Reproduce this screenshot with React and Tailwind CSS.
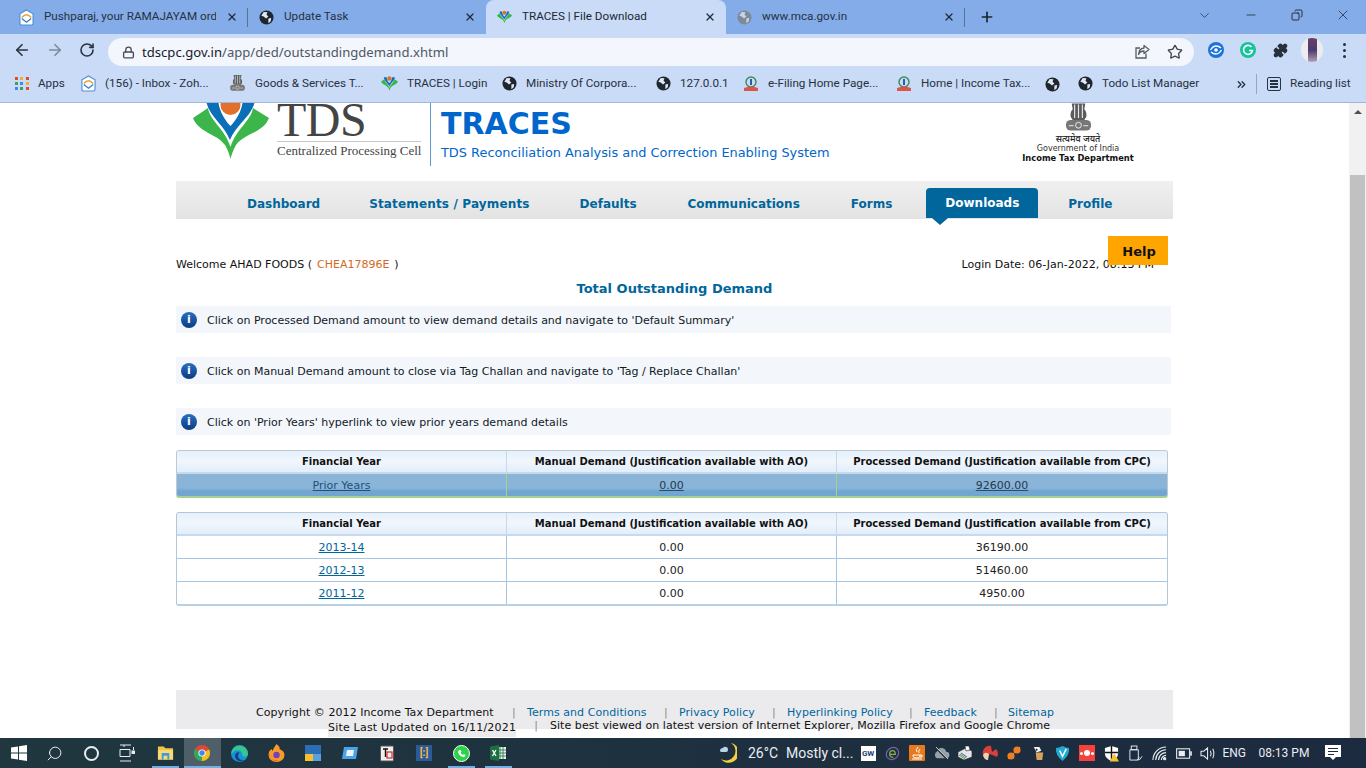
import React from 'react';
import { ArrowLeft, ArrowRight, RotateCw, Lock, Star, Puzzle, X, Plus, ChevronDown, Minus, Copy, ChevronsRight, Search } from 'lucide-react';

const Leaf = ({ className }) => (
  <svg viewBox="0 -8 76 64" className={className}>
    <circle cx="37.5" cy="2" r="10" fill="#e3702a" />
    <path d="M0 15 L15 5 C17 18 32 26 37.5 44 C43 26 58 18 60 5 L76 15 C70 30 52 30 43 42 C40 47 38.5 52 37.5 56 C36.5 52 35 47 32 42 C23 30 6 30 0 15Z" fill="#3cb54a" />
    <path d="M13 -4 C14 12 30 20 37 37 C44 20 61 12 62 -4 L50 -4 C49 8 44 16 37.5 23 C31 16 26 8 25 -4Z" fill="#0b6fb8" />
  </svg>
);

const Globe = ({ grey }) => (
  <svg viewBox="0 0 16 16" className="w-[15px] h-[15px] shrink-0">
    <circle cx="8" cy="8" r="7.5" fill={grey ? '#7f8a99' : '#20262e'} />
    <path d="M5 2 L9 2.5 L8 5 L10 7 L7.5 9 L5 7 L2.5 6 Z M10 9 L13 8.5 L12.5 12 L10 14 Z" fill={grey ? '#c5d4ea' : '#dfe8f5'} />
  </svg>
);

const ZohoIcon = () => (
  <svg viewBox="0 0 16 18" className="w-[15px] h-[17px] shrink-0">
    <path d="M8 1 L15 5 V15 Q15 17 13 17 H3 Q1 17 1 15 V5Z" fill="#fff" stroke="#4a90d9" strokeWidth="1.2" />
    <path d="M3 9 Q8 3 13 9" fill="none" stroke="#e8a33d" strokeWidth="1.5" />
    <path d="M3 10 L8 14 L13 10" fill="none" stroke="#3d7fc4" strokeWidth="1.5" />
  </svg>
);

const Emblem = ({ className }) => (
  <svg viewBox="0 0 30 30" className={className}>
    <path d="M8 0 H22 L21 6 Q24 9 23 14 L21 17 H9 L7 14 Q6 9 9 6Z" fill="#5c5c5c" />
    <path d="M11 1 V15 M15 1 V15 M19 1 V15" stroke="#e5e5e5" strokeWidth="1.2" />
    <rect x="2" y="17" width="26" height="11" rx="5" fill="#777" />
    <circle cx="15" cy="22.5" r="3" fill="none" stroke="#eee" />
    <path d="M5 23 H10 M20 23 H25" stroke="#eee" />
  </svg>
);

const IncomeTaxIcon = () => (
  <svg viewBox="0 0 16 16" className="w-[16px] h-[16px] shrink-0">
    <circle cx="8" cy="6" r="5" fill="none" stroke="#3a8a5c" strokeWidth="1.4" />
    <rect x="7" y="3" width="2" height="6" fill="#2a5fa5" />
    <path d="M1 12 Q8 9 15 12 V15 H1Z" fill="#d8564e" />
  </svg>
);

const Tab = ({ icon, title, active, divider, w }) => (
  <div className={`relative flex items-center h-[34px] pl-[11px] pr-[10px] gap-[10px] text-[11.7px] ${w} ${active ? 'bg-[#c9dbf6] rounded-t-[8px] text-[#1d2733]' : 'text-[#27313f]'}`}>
    {icon}
    <span className="flex-1 overflow-hidden whitespace-nowrap">{title}</span>
    <X size={12} strokeWidth={2.5} className="text-[#1f2a36] shrink-0" />
    {divider && <span className="absolute right-0 top-[8px] h-[19px] w-px bg-[#5d7290]"></span>}
  </div>
);

const Bookmark = ({ icon, label, w }) => (
  <div className={`flex items-center gap-[9px] shrink-0 ${w}`}>
    {icon}
    <span className="whitespace-nowrap">{label}</span>
  </div>
);

const InfoRow = ({ children }) => (
  <div className="h-[27px] mb-[24px] w-[995px] bg-[#f3f7fb] flex items-center pl-[5px] gap-[10px] text-[11px] text-[#111827]">
    <span className="w-[16px] h-[16px] rounded-full bg-gradient-to-b from-[#2a6fc0] to-[#0b3b85] flex items-center justify-center text-white font-bold text-[11px] leading-none">i</span>
    <span className="pt-[3px]">{children}</span>
  </div>
);

const Header = () => (
  <div className="grid grid-cols-[329px_330px_1fr] h-[23px] bg-gradient-to-b from-[#e6f1fb] via-[#f0f6fd] to-[#e2eefa] border-b-2 border-[#c7d9ea] font-bold text-[10px] text-[#111] text-center leading-[22px]">
    <div>Financial Year</div>
    <div className="border-l border-[#c6d8e9]">Manual Demand (Justification available with AO)</div>
    <div className="border-l border-[#c6d8e9]">Processed Demand (Justification available from CPC)</div>
  </div>
);

const yearRows = [
  ['2013-14', '0.00', '36190.00'],
  ['2012-13', '0.00', '51460.00'],
  ['2011-12', '0.00', '4950.00'],
];

const FooterLink = ({ w, children }) => (
  <span className={`flex shrink-0 text-[#00669c] ${w}`}>
    <span className="w-[15px] text-[#8a8a8a]">|</span>
    {children}
  </span>
);

const TaskIcon = ({ children, active, line }) => (
  <div className={`relative w-[37px] h-[30px] flex items-center justify-center ${active ? 'bg-[#4e5f69]' : ''}`}>
    {children}
    {line && <span className={`absolute bottom-0 h-[2px] bg-[#6fb0e6] ${active ? 'left-0 right-0' : 'left-[5px] right-[5px]'}`}></span>}
  </div>
);

const Tray = ({ children }) => <div className="w-[24.3px] h-[30px] flex items-center justify-center">{children}</div>;

export default function App() {
  return (
    <div className="w-[1366px] h-[768px] overflow-hidden flex flex-col bg-white font-['DejaVu_Sans',sans-serif]">
      {/* tab strip */}
      <div className="h-[34px] shrink-0 bg-[#83ace9] flex pl-[8px] font-['Roboto',sans-serif]">
        <Tab w="w-[240px]" icon={<ZohoIcon />} title="Pushparaj, your RAMAJAYAM ord" divider />
        <Tab w="w-[238px]" icon={<Globe />} title="Update Task" />
        <Tab w="w-[240px]" active icon={<Leaf className="w-[15px] h-[14px] shrink-0" />} title="TRACES | File Download" />
        <Tab w="w-[239px]" icon={<Globe grey />} title="www.mca.gov.in" divider />
        <div className="w-[44px] flex items-center justify-center"><Plus size={16} strokeWidth={2.5} className="text-[#1b2430]" /></div>
        <div className="flex-1 flex justify-end items-start text-[#26303c]">
          <div className="w-[46px] h-[30px] flex items-center justify-center mr-[1px]"><ChevronDown size={15} strokeWidth={1.2} /></div>
          <div className="w-[46px] h-[30px] flex items-center justify-center"><Minus size={14} strokeWidth={1.4} /></div>
          <div className="w-[46px] h-[30px] flex items-center justify-center"><Copy size={12} strokeWidth={1.6} className="-scale-x-100 text-[#111]" /></div>
          <div className="w-[46px] h-[30px] flex items-center justify-center"><X size={16} strokeWidth={1.2} /></div>
        </div>
      </div>

      {/* toolbar */}
      <div className="h-[32px] shrink-0 bg-[#c9dbf6] flex items-center font-['Noto_Sans',sans-serif]">
        <div className="w-[108px] flex items-center pl-[13px] gap-[15px] text-[#2a3340]">
          <ArrowLeft size={18} strokeWidth={2.2} />
          <ArrowRight size={18} strokeWidth={2.2} className="text-[#7e8a9c]" />
          <RotateCw size={16} strokeWidth={2.4} />
        </div>
        <div className="w-[1086px] h-[28px] mt-[4px] self-start rounded-full bg-[#f3f6fc] flex items-center pl-[14px] pr-[11px] text-[13.1px]">
          <Lock size={13} strokeWidth={2.5} className="text-[#4a4f57] mr-[7px]" />
          <span className="flex-1 pt-px text-[#4e5866]"><span className="text-[#16202c]">tdscpc.gov.in</span>/app/ded/outstandingdemand.xhtml</span>
          <svg viewBox="0 0 16 16" className="w-[16px] h-[16px] mr-[17px]" fill="none" stroke="#555c66" strokeWidth="1.3">
            <path d="M12 9.5 V14 H2 V4 H6" />
            <path d="M10 1.5 L15 5.5 L10 9.5 V7 Q6 7 4.5 10.5 Q5 4.5 10 4Z" strokeLinejoin="round" />
          </svg>
          <Star size={16} strokeWidth={2} className="text-[#3f4650]" />
        </div>
        <div className="flex-1 flex items-center pl-[6px]">
          <div className="w-[32px] flex justify-center">
            <svg viewBox="0 0 16 16" className="w-[16px] h-[16px]">
              <circle cx="8" cy="8" r="8" fill="#1a73d9" />
              <circle cx="8" cy="8" r="1.8" fill="#fff" />
              <path d="M2.5 8 Q5 4 8 4 Q11 4 13 6 M13.5 8 Q11 12 8 12 Q5 12 3 10" fill="none" stroke="#fff" strokeWidth="1.4" />
            </svg>
          </div>
          <div className="w-[32px] flex justify-center">
            <svg viewBox="0 0 16 16" className="w-[16px] h-[16px]">
              <circle cx="8" cy="8" r="8" fill="#15c39a" />
              <path d="M11.5 5 A4.5 4.5 0 1 0 12.5 8.5 H9" fill="none" stroke="#fff" strokeWidth="1.6" />
            </svg>
          </div>
          <div className="w-[32px] flex justify-center"><Puzzle size={15} fill="#27303b" className="text-[#27303b]" /></div>
          <div className="w-[32px] flex justify-center">
            <span className="w-[22px] h-[24px] rounded-full bg-[#ecebef] flex justify-center overflow-hidden">
              <span className="w-[9px] h-full bg-gradient-to-b from-[#6b3f66] via-[#4c3a6e] to-[#b7a0b5]"></span>
            </span>
          </div>
          <div className="w-[32px] flex flex-col items-center gap-[3px]">
            <span className="w-[3px] h-[3px] rounded-full bg-[#27303b]"></span>
            <span className="w-[3px] h-[3px] rounded-full bg-[#27303b]"></span>
            <span className="w-[3px] h-[3px] rounded-full bg-[#27303b]"></span>
          </div>
        </div>
      </div>

      {/* bookmarks */}
      <div className="h-[37px] shrink-0 bg-[#c9dbf6] border-b border-[#a3b6d6] flex items-center pl-[15px] text-[11.7px] text-[#27313f] font-['Roboto',sans-serif]">
        <Bookmark w="w-[66px]" label="Apps" icon={
          <span className="grid grid-cols-3 gap-[2px] w-[14px]">
            {['#e0463a', '#f2b01e', '#e0463a', '#3aa655', '#4285f4', '#f2b01e', '#4285f4', '#3aa655', '#e0463a'].map((c, i) => <span key={i} className="w-[3px] h-[3px]" style={{ background: c }}></span>)}
          </span>
        } />
        <Bookmark w="w-[148px]" label="(156) - Inbox - Zoh..." icon={<ZohoIcon />} />
        <Bookmark w="w-[152px]" label="Goods & Services T..." icon={<Emblem className="w-[17px] h-[17px]" />} />
        <Bookmark w="w-[121px]" label="TRACES | Login" icon={<Leaf className="w-[17px] h-[15px]" />} />
        <Bookmark w="w-[154px]" label="Ministry Of Corpora..." icon={<Globe />} />
        <Bookmark w="w-[87px]" label="127.0.0.1" icon={<Globe />} />
        <Bookmark w="w-[153px]" label="e-Filing Home Page..." icon={<IncomeTaxIcon />} />
        <Bookmark w="w-[149px]" label="Home | Income Tax..." icon={<IncomeTaxIcon />} />
        <Globe />
        <span className="w-[18px]"></span>
        <Bookmark w="w-[148px]" label="Todo List Manager" icon={<Globe />} />
        <ChevronsRight size={13} strokeWidth={2.5} className="ml-[9px] text-[#27313f]" />
        <span className="w-px h-[20px] bg-[#93a6c4] ml-[8px]"></span>
        <div className="flex items-center gap-[9px] ml-[10px]">
          <span className="w-[14px] h-[14px] border-[1.5px] border-[#27313f] rounded-[2px] flex flex-col justify-center gap-[1.5px] px-[2px]">
            <span className="h-[1.5px] bg-[#27313f]"></span><span className="h-[1.5px] bg-[#27313f]"></span><span className="h-[1.5px] bg-[#27313f]"></span>
          </span>
          <span>Reading list</span>
        </div>
      </div>

      {/* page */}
      <div className="flex-1 flex overflow-hidden">
        <div className="flex-1 pl-[176px]">
          <div className="w-[997px] relative">
            {/* header band */}
            <div className="h-[78px] flex overflow-hidden">
              <Leaf className="w-[76px] h-[64px] ml-[17px] -mt-[8px] shrink-0" />
              <div className="w-[144px] ml-[8px] shrink-0">
                <div className="font-['Liberation_Serif',serif] text-[48px] leading-[34px] h-[38px] text-[#444] tracking-[-0.5px]">TDS</div>
                <div className="border-t border-[#c8c8c8] pt-[1px] font-['Liberation_Serif',serif] text-[13px] leading-[16px] text-[#444] whitespace-nowrap">Centralized Processing Cell</div>
              </div>
              <div className="w-px h-[63px] bg-[#5a9bd5] ml-[9px] shrink-0"></div>
              <div className="ml-[10px] w-[520px] text-[#0066cc] shrink-0">
                <div className="font-bold text-[30px] leading-[36px] mt-[3px]">TRACES</div>
                <div className="text-[12.9px] leading-[16px] mt-[3px] whitespace-nowrap">TDS Reconciliation Analysis and Correction Enabling System</div>
              </div>
              <div className="ml-[61px] w-[112px] flex flex-col items-center">
                <Emblem className="w-[29px] h-[30px] shrink-0" />
                <div className="text-[9px] leading-[10px] mt-px font-['Noto_Sans',sans-serif] font-medium text-[#222]">सत्यमेव जयते</div>
                <div className="text-[8px] leading-[9px] text-[#333] whitespace-nowrap">Government of India</div>
                <div className="text-[8.3px] leading-[10px] font-bold text-[#111] whitespace-nowrap">Income Tax Department</div>
              </div>
            </div>

            {/* nav */}
            <div className="h-[38px] bg-gradient-to-b from-[#f0f0f0] to-[#e3e3e3] flex items-end gap-[51px] pl-[71px] text-[12px] font-bold text-[#00669c]">
              <div className="h-[37px] leading-[44px]">Dashboard</div>
              <div className="h-[37px] leading-[44px] -ml-[2px] tracking-[0.15px]">Statements / Payments</div>
              <div className="h-[37px] leading-[44px] -ml-px">Defaults</div>
              <div className="h-[37px] leading-[44px]">Communications</div>
              <div className="h-[37px] leading-[44px]">Forms</div>
              <div className="relative h-[30px] w-[112px] -ml-[17px] -mr-[21px] mb-[1px] bg-[#00669c] rounded-t-[4px] text-white text-center leading-[30px]">
                Downloads
                <span className="absolute left-[6px] top-[30px] w-0 h-0 border-l-[8px] border-r-[8px] border-t-[7px] border-l-transparent border-r-transparent border-t-[#00669c]"></span>
              </div>
              <div className="h-[37px] leading-[44px]">Profile</div>
            </div>

            {/* help overlays the login date */}
            <div className="absolute left-[932px] top-[133px] w-[60px] h-[29px] bg-[#ffa500] text-[#111] font-bold text-[13px] text-center leading-[31px] pl-[2px]">Help</div>

            <div className="flex justify-between items-center mt-[39px] h-[14px] text-[11px] text-[#111]">
              <div>Welcome AHAD FOODS ( <span className="text-[#d2691e] mx-[1.5px]">CHEA17896E</span> )</div>
              <div className="mr-[19px]">Login Date: 06-Jan-2022, 08:13 PM</div>
            </div>
            <div className="text-center font-bold text-[13px] leading-[16px] text-[#00669c] mt-[9px] mb-[9px]">Total Outstanding Demand</div>

            <InfoRow>Click on Processed Demand amount to view demand details and navigate to 'Default Summary'</InfoRow>
            <InfoRow>Click on Manual Demand amount to close via Tag Challan and navigate to 'Tag / Replace Challan'</InfoRow>
            <InfoRow>Click on 'Prior Years' hyperlink to view prior years demand details</InfoRow>

            {/* prior years table */}
            <div className="-mt-[9px] w-[992px] h-[48px] border-t border-l border-r border-[#bfc9d3] rounded-[3px] overflow-hidden border-b-2 border-b-[#a9d18e]">
              <Header />
              <div className="grid grid-cols-[329px_330px_1fr] h-[23px] text-[11px] text-center leading-[23px] text-[#1f4f7a] underline bg-[linear-gradient(to_bottom,#8ab5d9_60%,#71a6d1_75%)]">
                <div>Prior Years</div>
                <div className="border-l border-[#a9d18e] text-[#26384a]">0.00</div>
                <div className="border-l border-[#a9d18e] text-[#26384a]">92600.00</div>
              </div>
            </div>

            {/* yearly table */}
            <div className="mt-[14px] w-[992px] border-t border-r border-l border-[#b4c6d7] border-b-2 border-b-[#b9cfe2] rounded-[3px] overflow-hidden">
              <Header />
              {yearRows.map((r, i) => (
                <div key={r[0]} className={`grid grid-cols-[329px_330px_1fr] text-[11px] text-center leading-[23px] text-[#222] ${i < 2 ? 'h-[23px] border-b border-[#a4c6e2]' : 'h-[22px]'}`}>
                  <div className="text-[#00669c] underline">{r[0]}</div>
                  <div className="border-l border-[#a4c6e2]">{r[1]}</div>
                  <div className="border-l border-[#a4c6e2]">{r[2]}</div>
                </div>
              ))}
            </div>

            {/* footer */}
            <div className="mt-[84px] h-[39px] bg-[#ebebed] text-[11px] tracking-[0.06px] text-[#111] relative">
              <div className="flex pt-[16px] pl-[80px] leading-[14px] whitespace-nowrap">
                <span className="w-[256px] shrink-0">Copyright © 2012 Income Tax Department</span>
                <FooterLink w="w-[152px]">Terms and Conditions</FooterLink>
                <FooterLink w="w-[108px]">Privacy Policy</FooterLink>
                <FooterLink w="w-[137px]">Hyperlinking Policy</FooterLink>
                <FooterLink w="w-[85px]">Feedback</FooterLink>
                <FooterLink w="w-[60px]">Sitemap</FooterLink>
              </div>
              <div className="flex pl-[152px] whitespace-nowrap -mt-px">
                <span className="bg-[#ebebed] h-[18px] leading-[18px] tracking-[0.2px]">Site Last Updated on 16/11/2021</span>
                <span className="ml-[18px] leading-[14px] text-[#8a8a8a]">|</span>
                <span className="ml-[12px] leading-[14px]">Site best viewed on latest version of Internet Explorer, Mozilla Firefox and Google Chrome</span>
              </div>
            </div>
          </div>
        </div>

        {/* scrollbar */}
        <div className="w-[17px] bg-[#f1f1f1] flex flex-col items-center pt-[7px]">
          <span className="w-0 h-0 border-l-[4px] border-r-[4px] border-b-[4px] border-l-transparent border-r-transparent border-b-[#505050]"></span>
          <div className="w-[15px] flex-1 bg-[#c1c1c1] mt-[61px]"></div>
        </div>
      </div>

      {/* taskbar */}
      <div className="h-[30px] shrink-0 bg-gradient-to-r from-[#20373f] to-[#1c2a3f] flex items-center text-[#e8edf2] font-['Roboto',sans-serif]">
        <div className="w-[36px] flex justify-center pl-[1px]">
          <svg viewBox="0 0 16 16" className="w-[16px] h-[16px]"><path d="M0 2.5 L7 1.5 V7.5 H0Z M8 1.3 L16 0 V7.5 H8Z M0 8.5 H7 V14.5 L0 13.5Z M8 8.5 H16 V16 L8 14.7Z" fill="#fff" /></svg>
        </div>
        <div className="w-[37px] flex justify-center"><Search size={17} strokeWidth={1.4} className="-scale-x-100" /></div>
        <div className="w-[36px] flex justify-center"><span className="w-[15px] h-[15px] rounded-full border-2 border-[#e8edf2]"></span></div>
        <div className="w-[35px] flex justify-center">
          <svg viewBox="0 0 16 18" className="w-[16px] h-[18px]" fill="none" stroke="#e8edf2"><path d="M1 1 H12 M1 17 H12 M1 5.5 H11 V12.5 H1Z M5 1 V3 M14.5 3 V6" /><rect x="13" y="7" width="2.5" height="2.5" fill="#e8edf2" /></svg>
        </div>
        <span className="w-[2.5px]"></span>
        <TaskIcon line>
          <svg viewBox="0 0 18 16" className="w-[17px] h-[16px]"><path d="M1 1 H7 L9 3 H17 V15 H1Z" fill="#f4c542" /><path d="M1 5 H17 V15 H1Z" fill="#fbd975" /><path d="M5 8 H13 V15 H11 V11 H7 V15 H5Z" fill="#3f9ae0" /></svg>
        </TaskIcon>
        <TaskIcon active line>
          <svg viewBox="0 0 16 16" className="w-[16px] h-[16px]">
            <circle cx="8" cy="8" r="8" fill="#e0463a" />
            <path d="M8 8 L15.2 4.5 A8 8 0 0 1 8 16Z" fill="#f2c01e" />
            <path d="M8 8 L8 16 A8 8 0 0 1 1 4Z" fill="#34a853" />
            <circle cx="8" cy="8" r="3.6" fill="#fff" /><circle cx="8" cy="8" r="2.7" fill="#4285f4" />
          </svg>
        </TaskIcon>
        <TaskIcon>
          <svg viewBox="0 0 16 16" className="w-[17px] h-[17px]">
            <circle cx="8" cy="8" r="8" fill="#1592d8" />
            <path d="M0.5 6 A8 8 0 0 1 16 8 Q16 11 12.5 11 Q10.5 11 10.5 8.5 Q10 5 6 5 Q2.5 5 0.5 9Z" fill="#35c78b" />
            <path d="M4 9 Q5 6.5 8 7 Q6 9 7 12 Q8.5 14.5 12 14 Q7 17 4.5 13 Q3.5 11 4 9Z" fill="#1d3d7a" />
          </svg>
        </TaskIcon>
        <TaskIcon>
          <svg viewBox="0 0 16 18" className="w-[17px] h-[18px]">
            <path d="M8 0 Q12 3 11 5 Q16 7 16 11 A8 7 0 0 1 0 11 Q0 7 3 5 L4 7 Q5 4 8 0Z" fill="#f79a27" />
            <path d="M1 9 A7 7 0 0 0 11 16 Q5 17 2 14Z" fill="#e8344f" />
            <circle cx="8" cy="11" r="3.2" fill="#7442b8" />
          </svg>
        </TaskIcon>
        <TaskIcon>
          <span className="grid grid-cols-2 grid-rows-[9px_7px] w-[16px] h-[16px]"><span className="col-span-2 bg-[#2d6db5]"></span><span className="bg-[#f7c02f]"></span><span className="bg-[#5aa0dc]"></span></span>
        </TaskIcon>
        <TaskIcon>
          <svg viewBox="0 0 16 14" className="w-[16px] h-[14px]">
            <path d="M2 1 H16 L14 13 H0Z" fill="#4da3e8" />
            <path d="M5 4 H12 L11 10 H4Z" fill="#eaf4fc" />
          </svg>
        </TaskIcon>
        <TaskIcon>
          <svg viewBox="0 0 14 17" className="w-[14px] h-[17px]">
            <rect x="0.5" y="1" width="13" height="15" rx="1" fill="#efefef" stroke="#555" />
            <path d="M3 4 H8 M5.5 4 V12" stroke="#111" strokeWidth="1.4" />
            <rect x="7" y="7" width="5" height="6" fill="none" stroke="#d8343b" strokeWidth="1.3" />
          </svg>
        </TaskIcon>
        <TaskIcon>
          <span className="w-[16px] h-[16px] bg-[#2a5a9a] text-[#f4b942] text-[10px] font-bold text-center leading-[15px]">[:]</span>
        </TaskIcon>
        <TaskIcon line>
          <span className="w-[17px] h-[17px] rounded-full bg-[#2ad348] border-[1.5px] border-white flex items-center justify-center">
            <svg viewBox="0 0 10 10" className="w-[9px] h-[9px]"><path d="M2 1 L4 1 L5 3 L4 4.5 Q5 6 6.5 6.5 L8 5.5 L9.5 7 L8.5 9 Q4 9.5 1 4 Z" fill="#fff" /></svg>
          </span>
        </TaskIcon>
        <TaskIcon line>
          <svg viewBox="0 0 16 16" className="w-[16px] h-[16px]">
            <rect x="6" y="2" width="10" height="12" fill="#e8f2ea" />
            <path d="M10 2 V14 M13 2 V14 M6 5 H16 M6 8 H16 M6 11 H16" stroke="#1d6f42" strokeWidth="0.8" />
            <path d="M0 1.5 L9 0 V16 L0 14.5Z" fill="#1d6f42" />
            <path d="M2.5 5 L6 11 M6 5 L2.5 11" stroke="#fff" strokeWidth="1.3" />
          </svg>
        </TaskIcon>

        <div className="ml-[196.5px] w-[30px] flex justify-center">
          <svg viewBox="0 0 18 20" className="w-[18px] h-[20px]">
            <path d="M12 0 A10 10 0 1 1 2 16 A9 9 0 0 0 12 0Z" fill="#f7ce3e" />
            <path d="M1 8 Q1 5 4 5 Q5 3 7 4 Q9 4 9 7 Q9 9 7 9 H3 Q1 9 1 8Z" fill="#b9d3ea" />
          </svg>
        </div>
        <span className="text-[14px] ml-[5px] w-[34px] whitespace-nowrap">26°C</span>
        <span className="text-[14px] ml-[4px] w-[70px] whitespace-nowrap">Mostly cl...</span>
        <div className="flex items-center">
          <Tray><span className="w-[15px] h-[15px] bg-white text-[#1c3f7a] text-[8px] font-bold text-center leading-[15px]">GW</span></Tray>
          <Tray>
            <svg viewBox="0 0 16 16" className="w-[15px] h-[15px]" fill="none">
              <ellipse cx="8" cy="8" rx="7" ry="6" stroke="#7b5fb0" strokeWidth="1.3" transform="rotate(-40 8 8)" />
              <path d="M5 9 H11 Q11 5 8 5 Q5 5 5 9 Q5 12 9 12" stroke="#8fb24a" strokeWidth="1.3" />
            </svg>
          </Tray>
          <Tray>
            <svg viewBox="0 0 16 16" className="w-[16px] h-[16px]">
              <rect width="16" height="16" rx="1" fill="#e87a1d" />
              <path d="M9 2 Q6 5 8 7 M11 4 Q9 6 10 8 M4 10 H11 V11 Q11 13 8 13 Q4 13 4 11Z M11 10 H13 V12 H11 M3 14 H13" stroke="#fff" fill="none" />
            </svg>
          </Tray>
          <Tray>
            <svg viewBox="0 0 18 14" className="w-[17px] h-[13px]">
              <path d="M4 12 A4 4 0 0 1 4 5 Q5 1 9 1 Q13 1 14 5 A3.5 3.5 0 0 1 14 12Z" fill="#98a2ab" />
              <path d="M3 1 L15 13" stroke="#1f2c3c" strokeWidth="2" />
              <path d="M3 0 L16 13" stroke="#d5dade" strokeWidth="1" />
            </svg>
          </Tray>
          <Tray>
            <svg viewBox="0 0 16 16" className="w-[16px] h-[16px]">
              <path d="M1 7 L9 3 L15 6 V12 L7 15 L1 12Z" fill="#e5e5e5" stroke="#222" strokeWidth="0.6" />
              <path d="M8 1 H12 L13 5 L9 6Z" fill="#fff" stroke="#222" strokeWidth="0.6" />
              <path d="M2 10 L8 14 M3 9 L9 13" stroke="#3aa655" />
              <path d="M4 8 L10 12" stroke="#7442b8" />
            </svg>
          </Tray>
          <Tray>
            <svg viewBox="0 0 16 16" className="w-[16px] h-[16px]">
              <path d="M9 1 A7 7 0 0 0 3 13 L8 9 L15 12 A7 7 0 0 0 14 4 L10 7 Z" fill="#d9403a" />
              <path d="M1 10 Q3 6 7 9 L6 15 Q2 15 1 10Z" fill="#f0d3ae" />
            </svg>
          </Tray>
          <Tray>
            <svg viewBox="0 0 16 16" className="w-[16px] h-[16px]">
              <path d="M2 14 L14 2" stroke="#c9d2d9" />
              <circle cx="5" cy="11" r="3.6" fill="#ef7d22" /><circle cx="11" cy="5" r="3.6" fill="#ef7d22" />
            </svg>
          </Tray>
          <Tray>
            <svg viewBox="0 0 16 18" className="w-[15px] h-[17px]">
              <path d="M3 2 H9 L11 6 L6 8Z" fill="#f2f2f2" />
              <circle cx="6" cy="5" r="1" fill="#222" />
              <path d="M5 8 L13 8 L12 16 H6Z" fill="#d8a25e" />
            </svg>
          </Tray>
          <Tray>
            <svg viewBox="0 0 16 18" className="w-[15px] h-[17px]"><path d="M8 1 Q12 3 15 3 Q16 10 8 17 Q0 10 1 3 Q4 3 8 1Z" fill="#21a9d6" /><path d="M5 6 L8 12 L12 4" stroke="#fff" fill="none" strokeWidth="1.5" /></svg>
          </Tray>
          <Tray>
            <span className="w-[16px] h-[16px] bg-[#f4433c] flex items-center justify-center gap-px">
              <span className="w-[3px] h-[3px] rounded-full bg-white"></span>
              <span className="w-[6px] h-[6px] rounded-full bg-white"></span>
              <span className="w-[3px] h-[3px] rounded-full bg-white"></span>
            </span>
          </Tray>
          <Tray>
            <svg viewBox="0 0 16 18" className="w-[15px] h-[17px]"><path d="M8 1 L15 3 V9 Q15 14 8 17 Q1 14 1 9 V3Z" fill="#fff" /><path d="M8 1 V17 M1 8 H15" stroke="#111" strokeWidth="1.5" /><path d="M11 9 L16 17.5 H6Z" fill="#f7c02f" /></svg>
          </Tray>
          <Tray>
            <svg viewBox="0 0 16 18" className="w-[15px] h-[17px]" fill="none" stroke="#e8edf2">
              <rect x="3.5" y="1" width="6" height="4" /><path d="M2 5 H11 V16 H2Z M10 16 L12 13 M12 16 L15 12" />
            </svg>
          </Tray>
          <Tray>
            <svg viewBox="0 0 16 16" className="w-[15px] h-[15px]" fill="none" stroke="#e8edf2" strokeWidth="1.2">
              <path d="M1 15 A14 14 0 0 1 15 1 M4 15 A11 11 0 0 1 15 4 M7 15 A8 8 0 0 1 15 7 M10 15 A5 5 0 0 1 15 10" />
              <circle cx="13.5" cy="13.5" r="1.2" fill="#e8edf2" />
            </svg>
          </Tray>
          <Tray>
            <svg viewBox="0 0 18 12" className="w-[16px] h-[11px]">
              <rect x="0.7" y="0.7" width="14.6" height="10.6" fill="none" stroke="#e8edf2" strokeWidth="1.2" />
              <rect x="3" y="3" width="7" height="6" fill="#e8edf2" />
              <rect x="16" y="3.5" width="1.8" height="5" fill="#e8edf2" />
            </svg>
          </Tray>
          <Tray>
            <svg viewBox="0 0 18 16" className="w-[17px] h-[15px]" fill="none" stroke="#e8edf2" strokeWidth="1.1">
              <path d="M1 5.5 H4 L8 2 V14 L4 10.5 H1Z M11 5 Q12.5 8 11 11 M13.5 3 Q16 8 13.5 13" />
            </svg>
          </Tray>
        </div>
        <span className="text-[12px] ml-[2px] w-[23px]">ENG</span>
        <span className="text-[12px] ml-[13px] w-[48px] whitespace-nowrap">08:13 PM</span>
        <div className="ml-[13px] w-[28px] flex justify-center">
          <svg viewBox="0 0 16 18" className="w-[16px] h-[18px]">
            <path d="M0 1 H16 V13 H11 L8 16 L5 13 H0Z" fill="#fff" />
            <path d="M3 4.5 H13 M3 7.5 H13 M3 10.5 H9" stroke="#1c2a3f" />
          </svg>
        </div>
      </div>
    </div>
  );
}
